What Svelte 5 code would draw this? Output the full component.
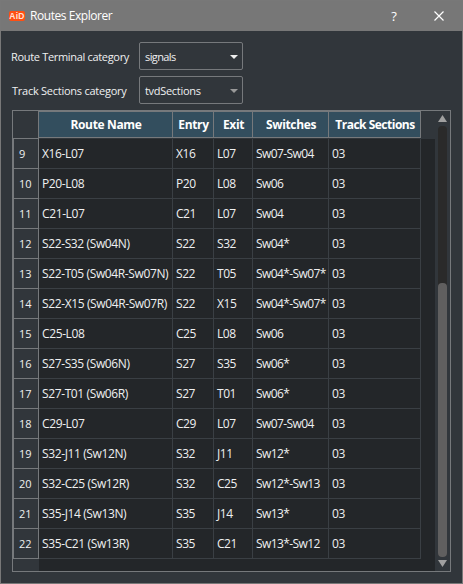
<script>
  const columns = [
    { label: 'Route Name', width: 134, key: 'name' },
    { label: 'Entry', width: 41, key: 'entry' },
    { label: 'Exit', width: 39, key: 'exit' },
    { label: 'Switches', width: 76, key: 'switches' },
    { label: 'Track Sections', width: 92, key: 'sections' }
  ];
  const rows = [
    ['X16-L07', 'X16', 'L07', 'Sw07-Sw04'],
    ['P20-L08', 'P20', 'L08', 'Sw06'],
    ['C21-L07', 'C21', 'L07', 'Sw04'],
    ['S22-S32 (Sw04N)', 'S22', 'S32', 'Sw04*'],
    ['S22-T05 (Sw04R-Sw07N)', 'S22', 'T05', 'Sw04*-Sw07*'],
    ['S22-X15 (Sw04R-Sw07R)', 'S22', 'X15', 'Sw04*-Sw07*'],
    ['C25-L08', 'C25', 'L08', 'Sw06'],
    ['S27-S35 (Sw06N)', 'S27', 'S35', 'Sw06*'],
    ['S27-T01 (Sw06R)', 'S27', 'T01', 'Sw06*'],
    ['C29-L07', 'C29', 'L07', 'Sw07-Sw04'],
    ['S32-J11 (Sw12N)', 'S32', 'J11', 'Sw12*'],
    ['S32-C25 (Sw12R)', 'S32', 'C25', 'Sw12*-Sw13'],
    ['S35-J14 (Sw13N)', 'S35', 'J14', 'Sw13*'],
    ['S35-C21 (Sw13R)', 'S35', 'C21', 'Sw13*-Sw12']
  ].map(([name, entry, exit, switches], i) => ({ id: i + 9, name, entry, exit, switches, sections: '03' }));
</script>

<div class="window">
  <header>
    <span class="logo">AiD</span>
    <span class="title">Routes Explorer</span>
    <span class="help">?</span>
    <svg class="close" width="10" height="10" viewBox="0 0 10 10"><path d="M.5 .5 9.5 9.5M9.5 .5 .5 9.5" /></svg>
  </header>

  <div class="field">
    <span class="lbl first">Route Terminal category</span>
    <div class="combo"><span class="signals">signals</span><svg width="8" height="4" viewBox="0 0 8 4"><path d="M0 0h8L4 4z" fill="#eee" /></svg></div>
  </div>
  <div class="field">
    <span class="lbl">Track Sections category</span>
    <div class="combo"><span class="tvd">tvdSections</span><svg width="8" height="4" viewBox="0 0 8 4"><path d="M0 0h8L4 4z" fill="#999" /></svg></div>
  </div>

  <div class="frame">
    <div class="grid">
      <div class="heads">
        <div class="corner"></div>
        {#each columns as c}
          <div class="head {c.key}" style="width:{c.width}px"><span>{c.label}</span></div>
        {/each}
      </div>
      {#each rows as r}
        <div class="row">
          <div class="num">{r.id}</div>
          {#each columns as c}
            <div class="cell {c.key}" style="width:{c.width}px">{r[c.key]}</div>
          {/each}
        </div>
      {/each}
      <div class="tail"></div>
    </div>
    <div class="scroll">
      <svg width="9" height="7" viewBox="0 0 9 7"><path d="M0 7h9L4.5 0z" fill="#a0a0a0" /></svg>
      <div class="track"><div class="thumb"></div></div>
      <svg width="9" height="7" viewBox="0 0 9 7"><path d="M0 0h9L4.5 7z" fill="#a0a0a0" /></svg>
    </div>
  </div>
</div>

<style>
  :global(body) { margin: 0; background: #31363b; }
  .window, .window * { box-sizing: border-box; }
  .window {
    width: 463px; height: 584px; overflow: hidden;
    border: 1px solid #787878; background: #31363b; color: #eff0f1;
    font: 12px/16px "Open Sans", "Noto Sans", sans-serif;
    white-space: nowrap;
  }
  header { height: 30px; display: flex; align-items: center; background: #777; color: #fff; margin-bottom: 11px; }
  .logo {
    width: 16px; height: 10px; margin-left: 8px; border-radius: 2px; background: #ff4f12; color: #ffe3d8;
    font: bold 8.5px/10px "Liberation Sans", sans-serif; text-align: center; letter-spacing: .3px;
  }
  .title { margin-left: 5px; width: 300px; letter-spacing: -.45px; }
  .help { margin-left: 60px; width: 8px; font-size: 13px; text-align: center; }
  .close { margin-left: 36px; }
  .close path { stroke: #fff; stroke-width: 1.2; fill: none; }
  .field { display: flex; height: 28px; margin-bottom: 6px; align-items: center; padding-left: 10px; font-size: 11px; }
  .lbl { width: 128px; padding: 2px 0 0 1px; letter-spacing: -.25px; }
  .lbl.first { padding-left: 0; letter-spacing: -.32px; }
  .combo {
    width: 104px; height: 28px; border: 1px solid #76797c; border-radius: 2px;
    display: flex; align-items: center; justify-content: space-between; padding: 1px 4px 0 5px;
  }
  .signals { letter-spacing: -.6px; }
  .tvd { letter-spacing: -.3px; }
  .frame { width: 439px; height: 462px; margin: 1px 0 0 11px; border: 1px solid #76797c; display: flex; background: #31363b; }
  .grid { width: 422px; background: #232629; }
  .heads { display: flex; height: 28px; background: #31363b; }
  .corner { width: 26px; border-right: 1px solid #76797c; border-bottom: 1px solid #76797c; }
  .head {
    height: 27px; background: #334e5e; color: #fff; font-weight: bold; border: solid #76797c; border-width: 1px 1px 1px 0;
    display: flex; align-items: center; justify-content: center; letter-spacing: -.35px; padding: 1px 0 0 1px;
  }
  .head.sections { letter-spacing: -.5px; }
  .row { display: flex; height: 30px; }
  .num {
    width: 26px; background: #31363b; border: solid #76797c; border-width: 0 1px 1px 1px;
    font-size: 11px; line-height: 30px; padding-left: 5px;
  }
  .cell {
    border: solid #3a3f44; border-width: 0 1px 1px 0; padding-left: 3px; line-height: 29px;
    letter-spacing: -.45px;
  }
  .cell.name { letter-spacing: -.38px; }
  .cell.switches { letter-spacing: -.58px; }
  .tail { height: 12px; width: 26px; background: #31363b; }
  .scroll { width: 15px; display: flex; flex-direction: column; padding: 4px 3px 3px; }
  .scroll svg { display: block; flex: none; }
  .track { width: 9px; height: 431px; margin: 4px 0 3px; background: #2a2a2a; border-radius: 4px; padding-top: 157px; }
  .thumb { width: 9px; height: 274px; background: #605f5f; border-radius: 4px; }
</style>
